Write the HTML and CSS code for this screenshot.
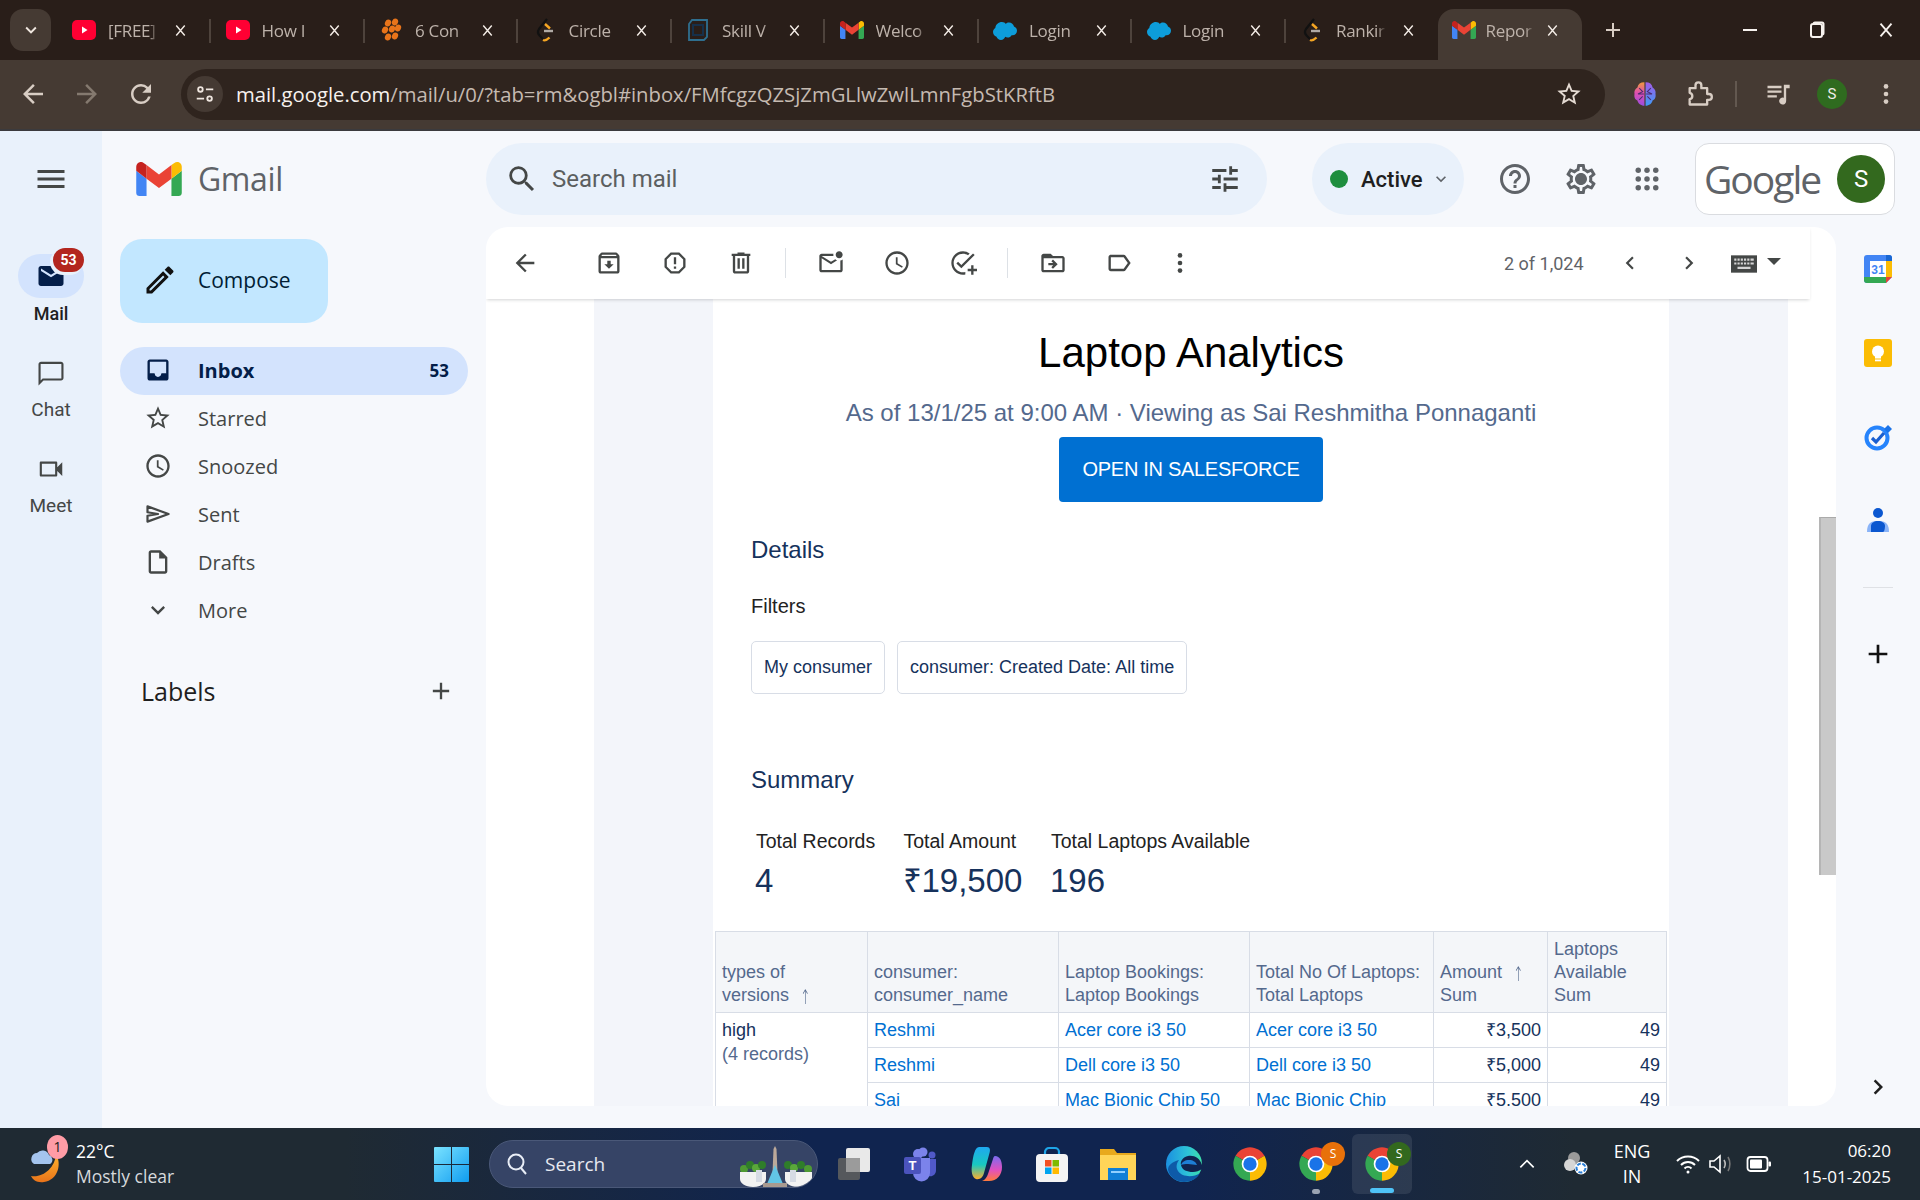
FILE: index.html
```html
<!DOCTYPE html>
<html lang="en">
<head>
    <meta charset="UTF-8">
    <meta name="viewport" content="width=device-width, initial-scale=1.0">
    <title>Report results - Gmail</title>
    <link rel="stylesheet" href="styles.css">
</head>
<body>
    <!-- icon sprite -->
    <svg class="sprite" width="0" height="0">
        <symbol id="i-menu" viewBox="0 0 24 24"><path d="M3 18h18v-2H3v2zm0-5h18v-2H3v2zm0-7v2h18V6H3z"/></symbol>
        <symbol id="i-search" viewBox="0 0 24 24"><path d="M15.5 14h-.79l-.28-.27A6.471 6.471 0 0 0 16 9.5 6.5 6.5 0 1 0 9.5 16c1.61 0 3.09-.59 4.23-1.57l.27.28v.79l5 4.99L20.49 19l-4.99-5zm-6 0C7.01 14 5 11.99 5 9.5S7.01 5 9.5 5 14 7.01 14 9.5 11.99 14 9.5 14z"/></symbol>
        <symbol id="i-tune" viewBox="0 0 24 24"><path d="M3 17v2h6v-2H3zM3 5v2h10V5H3zm10 16v-2h8v-2h-8v-2h-2v6h2zM7 9v2H3v2h4v2h2V9H7zm14 4v-2H11v2h10zm-6-4h2V7h4V5h-4V3h-2v6z"/></symbol>
        <symbol id="i-help" viewBox="0 0 24 24"><path d="M11 18h2v-2h-2v2zm1-16C6.48 2 2 6.48 2 12s4.48 10 10 10 10-4.48 10-10S17.52 2 12 2zm0 18c-4.41 0-8-3.59-8-8s3.59-8 8-8 8 3.59 8 8-3.59 8-8 8zm0-14c-2.21 0-4 1.79-4 4h2c0-1.1.9-2 2-2s2 .9 2 2c0 2-3 1.75-3 5h2c0-2.25 3-2.5 3-5 0-2.21-1.79-4-4-4z"/></symbol>
        <symbol id="i-gear" viewBox="0 0 24 24"><path d="M19.43 12.98c.04-.32.07-.64.07-.98 0-.34-.03-.66-.07-.98l2.11-1.65c.19-.15.24-.42.12-.64l-2-3.46c-.09-.16-.26-.25-.44-.25-.06 0-.12.01-.17.03l-2.49 1c-.52-.4-1.08-.73-1.69-.98l-.38-2.65C14.46 2.18 14.25 2 14 2h-4c-.25 0-.46.18-.49.42l-.38 2.65c-.61.25-1.17.59-1.69.98l-2.49-1c-.06-.02-.12-.03-.18-.03-.17 0-.34.09-.43.25l-2 3.46c-.13.22-.07.49.12.64l2.11 1.65c-.04.32-.07.65-.07.98 0 .33.03.66.07.98l-2.11 1.65c-.19.15-.24.42-.12.64l2 3.46c.09.16.26.25.44.25.06 0 .12-.01.17-.03l2.49-1c.52.4 1.08.73 1.69.98l.38 2.65c.03.24.24.42.49.42h4c.25 0 .46-.18.49-.42l.38-2.65c.61-.25 1.17-.59 1.69-.98l2.49 1c.06.02.12.03.18.03.17 0 .34-.09.43-.25l2-3.46c.12-.22.07-.49-.12-.64l-2.11-1.65zm-1.98-1.71c.04.31.05.52.05.73 0 .21-.02.43-.05.73l-.14 1.13.89.7 1.08.84-.7 1.21-1.27-.51-1.04-.42-.9.68c-.43.32-.84.56-1.25.73l-1.06.43-.16 1.13-.2 1.35h-1.4l-.19-1.35-.16-1.13-1.06-.43c-.43-.18-.83-.41-1.23-.71l-.91-.7-1.06.43-1.27.51-.7-1.21 1.08-.84.89-.7-.14-1.13c-.03-.31-.05-.54-.05-.74s.02-.43.05-.73l.14-1.13-.89-.7-1.08-.84.7-1.21 1.27.51 1.04.42.9-.68c.43-.32.84-.56 1.25-.73l1.06-.43.16-1.13.2-1.35h1.39l.19 1.35.16 1.13 1.06.43c.43.18.83.41 1.23.71l.91.7 1.06-.43 1.27-.51.7 1.21-1.07.85-.89.7.14 1.13zM12 8c-2.21 0-4 1.79-4 4s1.79 4 4 4 4-1.79 4-4-1.79-4-4-4z"/></symbol>
        <symbol id="i-apps" viewBox="0 0 24 24"><circle cx="5" cy="5" r="2.200"/><circle cx="12" cy="5" r="2.200"/><circle cx="19" cy="5" r="2.200"/><circle cx="5" cy="12" r="2.200"/><circle cx="12" cy="12" r="2.200"/><circle cx="19" cy="12" r="2.200"/><circle cx="5" cy="19" r="2.200"/><circle cx="12" cy="19" r="2.200"/><circle cx="19" cy="19" r="2.200"/></symbol>
        <symbol id="i-back" viewBox="0 0 24 24"><path d="M20 11H7.83l5.59-5.59L12 4l-8 8 8 8 1.41-1.41L7.83 13H20v-2z"/></symbol>
        <symbol id="i-forward" viewBox="0 0 24 24"><path d="M4 11h12.17l-5.59-5.59L12 4l8 8-8 8-1.41-1.41L16.17 13H4v-2z"/></symbol>
        <symbol id="i-reload" viewBox="0 0 24 24"><path d="M17.65 6.35A7.958 7.958 0 0 0 12 4c-4.42 0-7.99 3.58-7.99 8s3.57 8 7.99 8c3.73 0 6.84-2.55 7.73-6h-2.08A5.99 5.99 0 0 1 12 18c-3.31 0-6-2.69-6-6s2.69-6 6-6c1.66 0 3.14.69 4.22 1.78L13 11h7V4l-2.35 2.35z"/></symbol>
        <symbol id="i-inbox" viewBox="0 0 24 24"><path d="M19 3H5c-1.1 0-2 .9-2 2v14c0 1.1.9 2 2 2h14c1.1 0 2-.9 2-2V5c0-1.1-.9-2-2-2zm0 12h-4c0 1.66-1.34 3-3 3s-3-1.34-3-3H5V5h14v10z"/><path d="M5 15h4c0 1.66 1.34 3 3 3s3-1.34 3-3h4v4H5z"/></symbol>
        <symbol id="i-star" viewBox="0 0 24 24"><path d="M22 9.24l-7.19-.62L12 2 9.19 8.63 2 9.24l5.46 4.73L5.82 21 12 17.27 18.18 21l-1.63-7.03L22 9.24zM12 15.4l-3.76 2.27 1-4.28-3.32-2.88 4.38-.38L12 6.1l1.71 4.04 4.38.38-3.32 2.88 1 4.28L12 15.4z"/></symbol>
        <symbol id="i-clock" viewBox="0 0 24 24"><path d="M11.99 2C6.47 2 2 6.48 2 12s4.47 10 9.99 10C17.52 22 22 17.52 22 12S17.52 2 11.99 2zM12 20c-4.42 0-8-3.58-8-8s3.58-8 8-8 8 3.58 8 8-3.58 8-8 8zm.5-13H11v6l5.25 3.15.75-1.23-4.5-2.67z"/></symbol>
        <symbol id="i-send" viewBox="0 0 24 24"><path d="M3 5.500L21 12 3 18.500v-5l9-1.500-9-1.500z" fill="none" stroke="currentColor" stroke-width="1.900" stroke-linejoin="round"/></symbol>
        <symbol id="i-draft" viewBox="0 0 24 24"><path d="M14 2H6c-1.1 0-2 .9-2 2v16c0 1.1.9 2 2 2h12c1.1 0 2-.9 2-2V8l-6-6zM6 20V4h7v5h5v11H6z"/></symbol>
        <symbol id="i-more-arrow" viewBox="0 0 24 24"><path d="M16.59 8.59L12 13.17 7.41 8.59 6 10l6 6 6-6z"/></symbol>
        <symbol id="i-plus" viewBox="0 0 24 24"><path d="M19 13h-6v6h-2v-6H5v-2h6V5h2v6h6v2z"/></symbol>
        <symbol id="i-pencil" viewBox="0 0 24 24"><path d="M3 17.25V21h3.75L17.81 9.94l-3.75-3.75L3 17.25zM5.92 19H5v-.92l9.06-9.06.92.92L5.92 19zM20.71 5.63l-2.34-2.34c-.2-.2-.45-.29-.71-.29s-.51.1-.7.29l-1.83 1.83 3.75 3.75 1.83-1.83c.39-.39.39-1.02 0-1.41z"/></symbol>
        <symbol id="i-chat" viewBox="0 0 24 24"><path d="M20 3H4c-1 0-2 .9-2 2v17l4-4h14c1.100 0 2-.9 2-2V5c0-1.100-.9-2-2-2zm.3 13.300H5.300l-1.600 1.600V5c0-.2.100-.3.300-.3h16c.2 0 .3.100.3.300z"/></symbol>
        <symbol id="i-video" viewBox="0 0 24 24"><path d="M17 10.5V7c0-.55-.45-1-1-1H4c-.55 0-1 .45-1 1v10c0 .55.45 1 1 1h12c.55 0 1-.45 1-1v-3.5l4 4v-11l-4 4zM15.300 16.300H4.700V7.700h10.600z"/></symbol>
        <symbol id="i-mail" viewBox="0 0 24 24"><path d="M20 4H4c-1.1 0-2 .9-2 2v12c0 1.1.9 2 2 2h16c1.1 0 2-.9 2-2V6c0-1.1-.9-2-2-2zm0 4l-8 5-8-5V6l8 5 8-5v2z"/></symbol>
        <symbol id="i-archive" viewBox="0 0 24 24"><path d="M20.54 5.23l-1.39-1.68C18.88 3.21 18.47 3 18 3H6c-.47 0-.88.21-1.16.55L3.46 5.23C3.17 5.57 3 6.02 3 6.5V19c0 1.1.9 2 2 2h14c1.1 0 2-.9 2-2V6.5c0-.48-.17-.93-.46-1.27zM6.24 5h11.52l.83 1H5.42l.82-1zM5 19V8h14v11H5zm8.45-9h-2.9v3H8l4 4 4-4h-2.55z"/></symbol>
        <symbol id="i-spam" viewBox="0 0 24 24"><path d="M15.73 3H8.27L3 8.27v7.46L8.27 21h7.46L21 15.73V8.27L15.73 3zM19 14.9L14.9 19H9.1L5 14.9V9.1L9.1 5h5.8L19 9.1v5.8zM11 7h2v6h-2zM11 15h2v2h-2z"/></symbol>
        <symbol id="i-trash" viewBox="0 0 24 24"><path d="M15 4V3H9v1H4v2h1v13c0 1.1.9 2 2 2h10c1.1 0 2-.9 2-2V6h1V4h-5zm2 15H7V6h10v13zM9 8h2v9H9zm4 0h2v9h-2z"/></symbol>
        <symbol id="i-unread" viewBox="0 0 24 24"><path d="M22 8.98V18c0 1.1-.9 2-2 2H4c-1.1 0-2-.9-2-2V6c0-1.1.9-2 2-2h10.1c-.06.32-.1.66-.1 1s.04.68.1 1H4l8 5 3.67-2.29c.47.43 1.02.76 1.63.98L12 13 4 8v10h16V9.9c.74-.15 1.42-.48 2-.92zM16 5c0 1.66 1.34 3 3 3s3-1.34 3-3-1.34-3-3-3-3 1.34-3 3z"/></symbol>
        <symbol id="i-addtask" viewBox="0 0 24 24"><path d="M22 5.18L10.59 16.6l-4.24-4.24 1.41-1.41 2.83 2.83 10-10L22 5.18zM12 20c-4.42 0-8-3.58-8-8s3.58-8 8-8c1.58 0 3.04.46 4.28 1.25l1.44-1.44A9.9 9.9 0 0 0 12 2C6.48 2 2 6.48 2 12s4.48 10 10 10c.7 0 1.4-.07 2-.2v-2c-.6.13-1.3.2-2 .2zM19 14h2v3h3v2h-3v3h-2v-3h-3v-2h3z"/></symbol>
        <symbol id="i-move" viewBox="0 0 24 24"><path d="M20 6h-8l-2-2H4c-1.1 0-1.99.9-1.99 2L2 18c0 1.1.9 2 2 2h16c1.1 0 2-.9 2-2V8c0-1.1-.9-2-2-2zm0 12H4V8h16v10zm-8.01-9l-1.41 1.41L12.16 12H8v2h4.16l-1.59 1.59L11.99 17 16 13.01 11.99 9z"/></symbol>
        <symbol id="i-label" viewBox="0 0 24 24"><path d="M17.63 5.84C17.27 5.33 16.67 5 16 5L5 5.01C3.9 5.01 3 5.9 3 7v10c0 1.1.9 1.99 2 1.99L16 19c.67 0 1.27-.33 1.63-.84L22 12l-4.37-6.16zM16 17H5V7h11l3.55 5L16 17z"/></symbol>
        <symbol id="i-vert" viewBox="0 0 24 24"><circle cx="12" cy="5.500" r="2"/><circle cx="12" cy="12" r="2"/><circle cx="12" cy="18.500" r="2"/></symbol>
        <symbol id="i-left" viewBox="0 0 24 24"><path d="M15.41 7.41L14 6l-6 6 6 6 1.41-1.41L10.83 12z"/></symbol>
        <symbol id="i-right" viewBox="0 0 24 24"><path d="M10 6L8.59 7.41 13.17 12l-4.58 4.59L10 18l6-6z"/></symbol>
        <symbol id="i-keyboard" viewBox="0 0 24 18"><path d="M0 1h24v16H0z"/><path d="M3 4h2v2H3zm3 0h2v2H6zm3 0h2v2H9zm3 0h2v2h-2zm3 0h2v2h-2zm3 0h3v2h-3zM3 7.500h2v2H3zm3 0h2v2H6zm3 0h2v2H9zm3 0h2v2h-2zm3 0h2v2h-2zm3 0h3v2h-3zM6 11.500h12v2H6z" fill="#d5d5d5"/></symbol>
        <symbol id="i-x" viewBox="0 0 24 24"><path d="M6 5l12 14M18 5L6 19" fill="none" stroke="currentColor" stroke-width="2"/></symbol>

        <symbol id="l-gmail" viewBox="0 0 75 56">
            <path fill="#4285f4" d="M5.1 56H17V27.4L0 14.6V50.9C0 53.7 2.3 56 5.1 56z"/>
            <path fill="#34a853" d="M58 56h11.9c2.8 0 5.1-2.3 5.1-5.1V14.6L58 27.4z"/>
            <path fill="#fbbc04" d="M58 5.1v22.3l17-12.8V7.8c0-6.3-7.2-9.9-12.2-6.1z"/>
            <path fill="#ea4335" d="M17 27.4V5.1l20.5 15.4L58 5.1v22.3L37.5 42.8z"/>
            <path fill="#c5221f" d="M0 7.8v6.8l17 12.8V5.1l-4.8-3.6C7.2-2.3 0 1.3 0 7.8z"/>
        </symbol>
        <symbol id="l-yt" viewBox="0 0 24 24"><rect x="0" y="2" width="24" height="20" rx="5" fill="#ff0033"/><path d="M10 8.500v7l5.500-3.500z" fill="#fff"/></symbol>
        <symbol id="l-hive" viewBox="0 0 24 24"><g fill="#e8741a"><ellipse cx="9" cy="5" rx="3" ry="3.600" transform="rotate(25 9 5)"/><ellipse cx="16" cy="4" rx="3" ry="3.600" transform="rotate(25 16 4)"/><ellipse cx="6" cy="12" rx="3" ry="3.600" transform="rotate(25 6 12)"/><ellipse cx="13" cy="11" rx="3" ry="3.600" transform="rotate(25 13 11)"/><ellipse cx="19" cy="10" rx="3" ry="3.600" transform="rotate(25 19 10)"/><ellipse cx="9" cy="19" rx="3" ry="3.600" transform="rotate(25 9 19)"/><ellipse cx="16" cy="18" rx="3" ry="3.600" transform="rotate(25 16 18)"/></g></symbol>
        <symbol id="l-leet" viewBox="0 0 24 24"><path d="M14 1L6 11c-1.500 2.200-1 5 1 7l3 3" fill="none" stroke="#111" stroke-width="2.200"/><path d="M12 6l5 4.500M10 22c2 1 4 0 6.500-2.500" fill="none" stroke="#f5a623" stroke-width="2.400"/><path d="M11 13h9" stroke="#b0aaa5" stroke-width="2.400"/></symbol>
        <symbol id="l-skill" viewBox="0 0 24 24"><path d="M6 2h15v17l-3 3H3V6z" fill="none" stroke="#2f6f8f" stroke-width="1.800"/><path d="M7 7h10v10H7z" fill="none" stroke="#16304a" stroke-width="2"/></symbol>
        <symbol id="l-cloud" viewBox="0 0 24 24"><path d="M9 4c1.600 0 3 .7 3.800 1.900C13.600 5 14.800 4.500 16 4.500c2.500 0 4.500 1.700 5 4 1.700.6 3 2.300 3 4.200 0 2.500-2 4.500-4.500 4.500h-.9c-.8 1.500-2.300 2.300-4 2.300-.9 0-1.700-.2-2.400-.7C11.600 20.800 10 22 8 22c-2.100 0-3.900-1.300-4.500-3.200C1.500 18 0 16.200 0 14c0-1.700.9-3.200 2.300-4C2.700 6.500 5.500 4 9 4z" fill="#0d9dda"/></symbol>
        <symbol id="l-chrome" viewBox="0 0 48 48">
            <path fill="#ea4335" d="M24 24L6.700 14A20 20 0 0 1 41.300 14z"/>
            <path fill="#fbbc04" d="M24 24L41.300 14A20 20 0 0 1 24 44z"/>
            <path fill="#34a853" d="M24 24L24 44A20 20 0 0 1 6.700 14z"/>
            <circle cx="24" cy="24" r="10" fill="#fff"/><circle cx="24" cy="24" r="8" fill="#1a73e8"/>
        </symbol>
    </svg>

    <!-- browser chrome -->
    <div class="tabstrip">
        <div class="tab-search"><svg class="ico ico-16"><use href="#i-more-arrow"/></svg></div>
        <div class="tab"><svg class="fav"><use href="#l-yt"/></svg><span class="tab-title">[FREE]</span><svg class="tab-x"><use href="#i-x"/></svg></div>
        <div class="tab"><svg class="fav"><use href="#l-yt"/></svg><span class="tab-title">How I</span><svg class="tab-x"><use href="#i-x"/></svg></div>
        <div class="tab"><svg class="fav"><use href="#l-hive"/></svg><span class="tab-title">6 Con</span><svg class="tab-x"><use href="#i-x"/></svg></div>
        <div class="tab"><svg class="fav"><use href="#l-leet"/></svg><span class="tab-title">Circle</span><svg class="tab-x"><use href="#i-x"/></svg></div>
        <div class="tab"><svg class="fav"><use href="#l-skill"/></svg><span class="tab-title">Skill V</span><svg class="tab-x"><use href="#i-x"/></svg></div>
        <div class="tab"><svg class="fav"><use href="#l-gmail"/></svg><span class="tab-title">Welco</span><svg class="tab-x"><use href="#i-x"/></svg></div>
        <div class="tab"><svg class="fav"><use href="#l-cloud"/></svg><span class="tab-title">Login</span><svg class="tab-x"><use href="#i-x"/></svg></div>
        <div class="tab"><svg class="fav"><use href="#l-cloud"/></svg><span class="tab-title">Login</span><svg class="tab-x"><use href="#i-x"/></svg></div>
        <div class="tab"><svg class="fav"><use href="#l-leet"/></svg><span class="tab-title">Rankir</span><svg class="tab-x"><use href="#i-x"/></svg></div>
        <div class="tab tab-active"><svg class="fav"><use href="#l-gmail"/></svg><span class="tab-title">Repor</span><svg class="tab-x"><use href="#i-x"/></svg></div>
        <svg class="ico new-tab"><use href="#i-plus"/></svg>
        <div class="win-btns">
            <span class="win-min"></span>
            <span class="win-restore"></span>
            <svg class="win-close"><use href="#i-x"/></svg>
        </div>
    </div>

    <div class="toolbar">
        <svg class="ico nav-btn"><use href="#i-back"/></svg>
        <svg class="ico nav-btn nav-off"><use href="#i-forward"/></svg>
        <svg class="ico nav-btn"><use href="#i-reload"/></svg>
        <div class="omnibox">
            <span class="site-info">
                <svg viewBox="0 0 24 24" width="22" height="22"><circle cx="7" cy="7" r="2.500" fill="none" stroke="currentColor" stroke-width="2"/><path d="M13 7h8M3 17h8" stroke="currentColor" stroke-width="2"/><circle cx="17" cy="17" r="2.500" fill="none" stroke="currentColor" stroke-width="2"/></svg>
            </span>
            <span class="url"><span class="url-host">mail.google.com</span>/mail/u/0/?tab=rm&amp;ogbl#inbox/FMfcgzQZSjZmGLlwZwlLmnFgbStKRftB</span>
            <svg class="ico url-star"><use href="#i-star"/></svg>
        </div>
        <svg class="ext-brain" viewBox="0 0 24 24" width="28" height="28">
            <defs><linearGradient id="brainL" x1="0" y1="0" x2="0" y2="1"><stop offset="0" stop-color="#f09a3e"/><stop offset=".45" stop-color="#e04fb0"/><stop offset="1" stop-color="#9b4de0"/></linearGradient><linearGradient id="brainR" x1="0" y1="0" x2="0" y2="1"><stop offset="0" stop-color="#a25be8"/><stop offset="1" stop-color="#3f9bf5"/></linearGradient></defs>
            <path d="M11.500 2C8 2 6 3.500 5.500 6.500 3.500 7.500 2.500 10 3 12c-.5 2.500.5 5 2.500 5.500.5 2.500 3 4.500 6 4.500z" fill="url(#brainL)"/>
            <path d="M12.500 2c3.500 0 5.500 1.500 6 4.500 2 1 3 3.500 2.500 5.500.5 2.500-.5 5-2.500 5.500-.5 2.500-3 4.500-6 4.500z" fill="url(#brainR)"/>
            <path d="M7 7l3 3-4 2h5M17 7l-3 3 4 2h-5M7 17l3-3M17 17l-3-3" fill="none" stroke="#4c2a70" stroke-width=".9"/>
        </svg>
        <svg class="ext-puzzle" viewBox="0 0 24 24" width="28" height="28"><path d="M4 7h5V4.500a2.500 2.500 0 0 1 5 0V7h5v5h1.500a2.500 2.500 0 0 1 0 5H19v4H4v-4.500a2.800 2.800 0 0 0 0-5.500z" fill="none" stroke="#d8cdc4" stroke-width="2" stroke-linejoin="round"/></svg>
        <span class="tool-sep"></span>
        <svg class="ext-media" viewBox="0 0 24 24" width="28" height="28" fill="#d8cdc4"><path d="M3 5h12v2H3zM3 9h12v2H3zM3 13h8v2H3zM17 4h5v3h-3v11a3 3 0 1 1-2-2.800z"/></svg>
        <span class="profile-dot">S</span>
        <svg class="ico menu-dots"><use href="#i-vert"/></svg>
    </div>

    <!-- gmail -->
    <div class="app">
        <nav class="rail">
            <svg class="ico rail-menu"><use href="#i-menu"/></svg>
            <div class="rail-item rail-mail">
                <span class="rail-pill">
                    <svg class="ico"><use href="#i-mail"/></svg>
                    <b class="rail-badge">53</b>
                </span>
                <span class="rail-label">Mail</span>
            </div>
            <div class="rail-item">
                <span class="rail-pill"><svg class="ico"><use href="#i-chat"/></svg></span>
                <span class="rail-label">Chat</span>
            </div>
            <div class="rail-item">
                <span class="rail-pill"><svg class="ico"><use href="#i-video"/></svg></span>
                <span class="rail-label">Meet</span>
            </div>
        </nav>

        <aside class="sidebar">
            <div class="brand">
                <svg class="brand-logo"><use href="#l-gmail"/></svg>
                <span class="brand-name">Gmail</span>
            </div>
            <div class="compose">
                <svg class="ico"><use href="#i-pencil"/></svg>
                <span>Compose</span>
            </div>
            <ul class="folders">
                <li class="folder folder-on"><svg class="ico"><use href="#i-inbox"/></svg><span>Inbox</span><em>53</em></li>
                <li class="folder"><svg class="ico"><use href="#i-star"/></svg><span>Starred</span></li>
                <li class="folder"><svg class="ico"><use href="#i-clock"/></svg><span>Snoozed</span></li>
                <li class="folder"><svg class="ico"><use href="#i-send"/></svg><span>Sent</span></li>
                <li class="folder"><svg class="ico"><use href="#i-draft"/></svg><span>Drafts</span></li>
                <li class="folder"><svg class="ico"><use href="#i-more-arrow"/></svg><span>More</span></li>
            </ul>
            <div class="labels-head">
                <span>Labels</span>
                <svg class="ico"><use href="#i-plus"/></svg>
            </div>
        </aside>

        <div class="workspace">
            <header class="topbar">
                <div class="searchbox">
                    <svg class="ico"><use href="#i-search"/></svg>
                    <span class="search-text">Search mail</span>
                    <svg class="ico search-tune"><use href="#i-tune"/></svg>
                </div>
                <div class="status"><i class="status-dot"></i><span>Active</span><svg class="ico"><use href="#i-more-arrow"/></svg></div>
                <svg class="ico top-ico top-help"><use href="#i-help"/></svg>
                <svg class="ico top-ico"><use href="#i-gear"/></svg>
                <svg class="ico top-ico top-apps"><use href="#i-apps"/></svg>
                <div class="account"><span class="google-word">Google</span><span class="avatar">S</span></div>
            </header>

            <main class="card">
                <div class="mail-tools">
                    <span class="mt mt-back"><svg class="ico"><use href="#i-back"/></svg></span>
                    <span class="mt mt-first"><svg class="ico"><use href="#i-archive"/></svg></span>
                    <span class="mt"><svg class="ico"><use href="#i-spam"/></svg></span>
                    <span class="mt"><svg class="ico"><use href="#i-trash"/></svg></span>
                    <i class="mt-sep"></i>
                    <span class="mt"><svg class="ico"><use href="#i-unread"/></svg></span>
                    <span class="mt"><svg class="ico"><use href="#i-clock"/></svg></span>
                    <span class="mt"><svg class="ico"><use href="#i-addtask"/></svg></span>
                    <i class="mt-sep"></i>
                    <span class="mt"><svg class="ico"><use href="#i-move"/></svg></span>
                    <span class="mt"><svg class="ico"><use href="#i-label"/></svg></span>
                    <span class="mt mt-more"><svg class="ico"><use href="#i-vert"/></svg></span>
                    <span class="pager">2 of 1,024</span>
                    <span class="mt pager-btn"><svg class="ico"><use href="#i-left"/></svg></span>
                    <span class="mt pager-btn"><svg class="ico"><use href="#i-right"/></svg></span>
                    <svg class="ico kb"><use href="#i-keyboard"/></svg>
                    <i class="kb-caret"></i>
                </div>

                <div class="mail-scroll">
                    <div></div>
                    <div class="gutter"></div>
                    <article class="report">
                        <h1>Laptop Analytics</h1>
                        <p class="report-sub">As of 13/1/25 at 9:00 AM · Viewing as Sai Reshmitha Ponnaganti</p>
                        <a class="sf-btn">OPEN IN SALESFORCE</a>
                        <h2 class="details-h">Details</h2>
                        <div class="filters-h">Filters</div>
                        <div class="chips">
                            <span class="chip">My consumer</span>
                            <span class="chip">consumer: Created Date: All time</span>
                        </div>
                        <h2 class="summary-h">Summary</h2>
                        <div class="totals">
                            <div class="total total-a"><span>Total Records</span><b>4</b></div>
                            <div class="total total-b"><span>Total Amount</span><b>₹19,500</b></div>
                            <div class="total"><span>Total Laptops Available</span><b>196</b></div>
                        </div>
                        <table class="grid">
                            <colgroup>
                                <col class="c1"><col class="c2"><col class="c3"><col class="c4"><col class="c5"><col class="c6">
                            </colgroup>
                            <thead>
                                <tr>
                                    <th>types of<br>versions <i class="up">↑</i></th>
                                    <th>consumer:<br>consumer_name</th>
                                    <th>Laptop Bookings:<br>Laptop Bookings</th>
                                    <th>Total No Of Laptops:<br>Total Laptops</th>
                                    <th>Amount <i class="up">↑</i><br>Sum</th>
                                    <th>Laptops<br>Available<br>Sum</th>
                                </tr>
                            </thead>
                            <tbody>
                                <tr>
                                    <td rowspan="3" class="group">high<br><span>(4 records)</span></td>
                                    <td class="lnk">Reshmi</td><td class="lnk">Acer core i3 50</td><td class="lnk">Acer core i3 50</td>
                                    <td class="num">₹3,500</td><td class="num">49</td>
                                </tr>
                                <tr>
                                    <td class="lnk">Reshmi</td><td class="lnk">Dell core i3 50</td><td class="lnk">Dell core i3 50</td>
                                    <td class="num">₹5,000</td><td class="num">49</td>
                                </tr>
                                <tr>
                                    <td class="lnk">Sai</td><td class="lnk">Mac Bionic Chip 50</td><td class="lnk">Mac Bionic Chip</td>
                                    <td class="num">₹5,500</td><td class="num">49</td>
                                </tr>
                            </tbody>
                        </table>
                    </article>
                    <div class="gutter"></div>
                    <div></div>
                    <div class="scrollbar"><div class="thumb"></div></div>
                </div>
            </main>
        </div>

        <aside class="addons">
            <div class="addon">
                <svg viewBox="0 0 28 28" width="28" height="28">
                    <path d="M3 0h22a3 3 0 0 1 3 3v19l-6 6H3a3 3 0 0 1-3-3V3a3 3 0 0 1 3-3z" fill="#4285f4"/>
                    <path d="M22 0h3a3 3 0 0 1 3 3v3h-6z" fill="#1967d2"/><path d="M22 6h6v16h-6z" fill="#fbbc04"/>
                    <path d="M0 22h22v6H3a3 3 0 0 1-3-3z" fill="#34a853"/><path d="M22 22h6l-6 6z" fill="#ea4335"/>
                    <rect x="6" y="6" width="16" height="16" fill="#fff"/>
                    <text x="14" y="19" class="cal-num" text-anchor="middle">31</text>
                </svg>
            </div>
            <div class="addon">
                <svg viewBox="0 0 28 28" width="28" height="28"><rect width="28" height="28" rx="3" fill="#fbbc04"/><circle cx="14" cy="12.500" r="6" fill="#fff"/><rect x="11" y="17" width="6" height="2.500" fill="#fff"/><rect x="11" y="20.500" width="6" height="1.800" fill="#fff"/></svg>
            </div>
            <div class="addon">
                <svg viewBox="0 0 28 28" width="28" height="28"><circle cx="13" cy="15" r="10.500" fill="none" stroke="#2684fc" stroke-width="4"/><path d="M8 15l4 4 8-9" fill="none" stroke="#1a5fd0" stroke-width="3.200"/><path d="M20 6l4-4 4 4-4 4z" fill="#1a73e8"/></svg>
            </div>
            <div class="addon">
                <svg viewBox="0 0 28 28" width="28" height="28"><circle cx="14" cy="6" r="5" fill="#0b57d0"/><path d="M3 25c0-8 3-11 11-11s11 3 11 11z" fill="#8ab4f8"/><path d="M7 25v-6c0-3 3-5 7-5s7 2 7 5c0 3-1 6-2 6z" fill="#0b57d0"/></svg>
            </div>
            <i class="addon-sep"></i>
            <svg class="ico addon-plus"><use href="#i-plus"/></svg>
            <svg class="ico addon-hide"><use href="#i-right"/></svg>
        </aside>
    </div>

    <!-- windows taskbar -->
    <footer class="taskbar">
        <div class="weather">
            <span class="weather-ico">
                <svg viewBox="0 0 34 40" width="34" height="40"><defs><linearGradient id="moon" x1="0" y1="0" x2="0" y2="1"><stop offset="0" stop-color="#ffb52e"/><stop offset="1" stop-color="#e8731a"/></linearGradient></defs><path d="M26 10c6 10 2 26-12 28C7 39 3 36 1 32c12 2 24-8 25-22z" fill="url(#moon)"/><path d="M4 20a6 6 0 0 1 3-11 7 7 0 0 1 12 2 5 5 0 0 1 1 9z" fill="#a4c4ee"/></svg>
                <b class="weather-badge">1</b>
            </span>
            <div class="weather-text"><span>22°C</span><span class="weather-sub">Mostly clear</span></div>
        </div>
        <svg class="winlogo" viewBox="0 0 35 35" width="35" height="35"><defs><linearGradient id="win" x1="0" y1="0" x2="1" y2="1"><stop offset="0" stop-color="#7be3ff"/><stop offset="1" stop-color="#0f9cf0"/></linearGradient></defs><path d="M1 0h16v17H0V1a1 1 0 0 1 1-1zM18 0h16a1 1 0 0 1 1 1v16H18zM0 18h17v17H1a1 1 0 0 1-1-1zM18 18h17v16a1 1 0 0 1-1 1H18z" fill="url(#win)"/></svg>
        <div class="task-search">
            <svg viewBox="0 0 24 24" width="24" height="24"><circle cx="11" cy="10" r="7.500" fill="none" stroke="#e8edf6" stroke-width="2"/><path d="M16 16l5 6" stroke="#e8edf6" stroke-width="2"/></svg>
            <span>Search</span>
            <svg class="search-art" viewBox="0 0 76 42" width="76" height="42">
                <circle cx="6" cy="24" r="4" fill="#4f9a33"/><circle cx="12" cy="20" r="4" fill="#2f7d2a"/><circle cx="18" cy="23" r="4" fill="#5aa83a"/><circle cx="24" cy="20" r="4" fill="#2f7d2a"/>
                <circle cx="50" cy="20" r="4" fill="#2f7d2a"/><circle cx="56" cy="23" r="4" fill="#5aa83a"/><circle cx="63" cy="20" r="4" fill="#2f7d2a"/><circle cx="70" cy="24" r="4" fill="#4f9a33"/>
                <path d="M2 27h26v7c0 4-5 8-13 8S2 38 2 34zM47 27h27v7c0 4-6 8-14 8s-13-4-13-8z" fill="#f2f2f2"/>
                <rect x="18" y="25" width="6" height="12" fill="#d6dbe4"/><rect x="52" y="25" width="6" height="12" fill="#d6dbe4"/>
                <path d="M37 1l1.500 3 1 24h-5l1-24z" fill="#bca99a"/>
                <path d="M37 20l8 19H29z" fill="#62c5e6"/><rect x="25" y="38" width="24" height="4" fill="#a89a90"/>
            </svg>
        </div>
        <div class="task-apps">
            <span class="app-slot"><svg viewBox="0 0 36 36" width="36" height="36"><rect x="2" y="12" width="22" height="22" rx="2" fill="#55585c"/><rect x="10" y="2" width="24" height="24" rx="2" fill="#e9e9e9"/><rect x="10" y="12" width="14" height="14" fill="#9b9b9b"/></svg></span>
            <span class="app-slot"><svg viewBox="0 0 36 36" width="36" height="36"><circle cx="21" cy="6" r="4.500" fill="#7b83eb"/><circle cx="30" cy="9" r="3.500" fill="#5059c9"/><path d="M24 13h10v11c0 5-4 7-7 6z" fill="#5059c9"/><path d="M11 12h17v15a8.500 8.500 0 0 1-17 0z" fill="#7b83eb"/><circle cx="16" cy="8" r="5" fill="#7b83eb"/><rect x="2" y="11" width="17" height="17" rx="2" fill="#4b53bc"/><text x="10.500" y="24" class="teams-t" text-anchor="middle">T</text></svg></span>
            <span class="app-slot"><svg viewBox="0 0 36 36" width="36" height="36"><defs><linearGradient id="cop" x1="0" y1="0" x2="0" y2="1"><stop offset="0" stop-color="#1fa8f0"/><stop offset=".55" stop-color="#18c8c0"/><stop offset="1" stop-color="#ffb02e"/></linearGradient><linearGradient id="cop2" x1="0" y1="0" x2="0" y2="1"><stop offset="0" stop-color="#7a6cf0"/><stop offset=".55" stop-color="#e050c0"/><stop offset="1" stop-color="#ff7a3c"/></linearGradient></defs><path d="M11 1h8c3 0 3.500 3 2.500 6L16 27c-1 4-4 7-8 6-4-1.500-5-8-4-14C5 10 7 1 11 1z" fill="url(#cop)"/><path d="M27 10c5 0 7 5 7 11 0 8-5 14-13 14h-7c3-1 5-4 6-7l5-15c.3-1.500 1-3 2-3z" fill="url(#cop2)"/></svg></span>
            <span class="app-slot"><svg viewBox="0 0 36 36" width="36" height="40"><path d="M11 10V6a4 4 0 0 1 4-4h6a4 4 0 0 1 4 4v4" fill="none" stroke="#1ea5e8" stroke-width="2.200"/><rect x="2" y="8" width="32" height="28" rx="4" fill="#f4f4f4"/><rect x="11" y="14" width="6.500" height="6.500" fill="#f25022"/><rect x="18.500" y="14" width="6.500" height="6.500" fill="#7fba00"/><rect x="11" y="21.500" width="6.500" height="6.500" fill="#00a4ef"/><rect x="18.500" y="21.500" width="6.500" height="6.500" fill="#ffb900"/></svg></span>
            <span class="app-slot"><svg viewBox="0 0 36 36" width="36" height="36"><path d="M0 3h14l3 4h19v27H0z" fill="#e8a91c"/><path d="M0 9h36v25H0z" fill="#ffd558"/><path d="M8 22h20v12H8z" fill="#0f7fd6"/><path d="M11 25h14v2H11z" fill="#8fd0ff"/></svg></span>
            <span class="app-slot"><svg viewBox="0 0 36 36" width="36" height="36"><defs><linearGradient id="edg" x1="0" y1="0" x2="1" y2="0"><stop offset="0" stop-color="#1b8fe0"/><stop offset=".6" stop-color="#2dc3d8"/><stop offset="1" stop-color="#3ee0a8"/></linearGradient></defs><circle cx="18" cy="18" r="18" fill="url(#edg)"/><path d="M2 24c2 8 9 12 16 12 7 0 13-3 16-9-7 5-18 4-22-2-2-3-2-7 1-11C6 16 2 19 2 24z" fill="#0e5aa8"/><path d="M36 19C34 12 28 9 22 10c-5 1-8 5-7 9 1 5 6 7 12 7 3 0 6-1 9-3z" fill="#10244f"/><path d="M15 19c1-3 4-5 8-5 4 0 7 2 8 5-3 0-6-1-9-1-3 0-5 0-7 1z" fill="#1e7fd6"/></svg></span>
            <span class="app-slot"><svg class="ico-chrome"><use href="#l-chrome"/></svg></span>
            <span class="app-slot app-open"><svg class="ico-chrome"><use href="#l-chrome"/></svg><b class="prof prof-s">S</b></span>
            <span class="app-slot app-current"><svg class="ico-chrome"><use href="#l-chrome"/></svg><b class="prof prof-g">S</b></span>
        </div>
        <div class="tray">
            <svg class="tray-up" viewBox="0 0 24 24" width="20" height="20"><path d="M4 16l8-8 8 8" fill="none" stroke="#fff" stroke-width="2"/></svg>
            <svg class="tray-cloud" viewBox="0 0 26 26" width="26" height="26"><circle cx="11" cy="7" r="6" fill="#9a9a9a"/><circle cx="7" cy="14" r="6" fill="#d6d6d6"/><circle cx="18" cy="17" r="6.500" fill="#fff"/><circle cx="18" cy="17" r="4.500" fill="none" stroke="#2a7fd8" stroke-width="2" stroke-dasharray="4 1.500"/></svg>
            <div class="tray-lang"><span>ENG</span><span>IN</span></div>
            <svg class="tray-wifi" viewBox="0 0 24 24" width="24" height="24" fill="none" stroke="#fff" stroke-width="2"><path d="M1 9c6-6 16-6 22 0M5 13c4-4 10-4 14 0M8.500 16.500c2-2 5-2 7 0"/><circle cx="12" cy="20" r="1.500" fill="#fff" stroke="none"/></svg>
            <svg class="tray-sound" viewBox="0 0 26 24" width="26" height="24" fill="none" stroke="#fff" stroke-width="1.600"><path d="M2 9h4l6-5v16l-6-5H2z"/><path d="M16 8c1.500 2.500 1.500 5.500 0 8" stroke="#bbb"/><path d="M20 5c2.500 4 2.500 10 0 14" stroke="#777"/></svg>
            <svg class="tray-batt" viewBox="0 0 26 24" width="26" height="24"><rect x="1.500" y="5" width="20" height="14" rx="3" fill="none" stroke="#fff" stroke-width="1.800"/><rect x="4" y="7.500" width="12" height="9" rx="1" fill="#fff"/><rect x="22.500" y="9.500" width="2.500" height="5" rx="1" fill="#fff"/></svg>
            <div class="tray-clock"><span>06:20</span><span>15-01-2025</span></div>
        </div>
    </footer>
</body>
</html>
```

FILE: styles.css
```css
* {
    box-sizing: border-box;
}
html, body {
    margin: 0;
    height: 100%;
}
body {
    width: 1920px;
    height: 1200px;
    overflow: hidden;
    display: flex;
    flex-direction: column;
    font-family: Roboto, Arial, sans-serif;
    background: #f6f8fc;
}
.sprite {
    position: absolute;
}
.ico {
    width: 24px;
    height: 24px;
    fill: currentColor;
    flex: none;
}
.ico-16 {
    width: 22px;
    height: 22px;
}

/* tab strip */
.tabstrip {
    height: 60px;
    flex: none;
    background: #291e19;
    display: flex;
    align-items: flex-end;
    padding-left: 10px;
    color: #d8cdc4;
}
.tab-search {
    width: 41px;
    height: 42px;
    margin-bottom: 9px;
    border-radius: 13px;
    background: #453a33;
    display: flex;
    align-items: center;
    justify-content: center;
    color: #efe6df;
    flex: none;
}
.tab {
    width: 153.500px;
    height: 51px;
    flex: none;
    display: flex;
    align-items: center;
    padding: 0 0 9px 15px;
    position: relative;
    font-family: "Open Sans", sans-serif;
}
.tab-search + .tab {
    margin-left: 6px;
}
.tab::after {
    content: "";
    position: absolute;
    right: -0.5px;
    top: 10px;
    height: 24px;
    width: 2px;
    background: #4e433c;
}
.fav {
    width: 24px;
    height: 24px;
    flex: none;
}
.tab-title {
    margin-left: 12px;
    width: 50px;
    flex: none;
    white-space: nowrap;
    font-size: 17px;
    letter-spacing: -0.3px;
    color: #bdb2aa;
    -webkit-mask-image: linear-gradient(90deg, #000 82%, transparent);
    mask-image: linear-gradient(90deg, #000 82%, transparent);
}
.tab-x {
    width: 17px;
    height: 17px;
    margin-left: 14px;
    color: #f3ece6;
    flex: none;
}
.tab-active {
    width: 144px;
    margin-left: -1px;
    padding-left: 14px;
    height: 51px;
    background: #453a33;
    border-radius: 16px 16px 0 0;
}
.tab-active::after {
    display: none;
}
.tab-active .tab-title {
    margin-left: 10px;
    width: 48px;
}
.tab-active .tab-x {
    margin-left: 10px;
}
.tab:has(+ .tab-active)::after {
    display: none;
}
.new-tab {
    width: 24px;
    height: 24px;
    margin: 0 0 18px 19px;
    color: #d8cdc4;
}
.win-btns {
    margin-left: auto;
    height: 60px;
    display: flex;
    align-items: center;
    color: #f7f2ee;
}
.win-min {
    width: 14px;
    height: 2px;
    background: currentColor;
}
.win-restore {
    width: 13px;
    height: 15px;
    margin-left: 53px;
    border: 2px solid currentColor;
    border-radius: 3px;
    box-shadow: 2px -2px 0 -0.5px currentColor;
}
.win-close {
    width: 22px;
    height: 22px;
    margin: 0 23px 0 52px;
}

/* address bar */
.toolbar {
    height: 71px;
    flex: none;
    background: #453a33;
    border-bottom: 2px solid #3b3a3d;
    display: flex;
    align-items: center;
    color: #d8cdc4;
    padding-bottom: 1px;
}
.nav-btn {
    width: 30px;
    height: 30px;
    margin-left: 24px;
    fill: #d8cdc4;
}
.nav-btn:first-child {
    margin-left: 18px;
}
.nav-off {
    fill: #84796f;
}
.omnibox {
    width: 1424px;
    height: 51px;
    margin-left: 25px;
    border-radius: 26px;
    background: #2f241e;
    display: flex;
    align-items: center;
    padding-left: 6px;
}
.site-info {
    width: 36px;
    height: 36px;
    border-radius: 50%;
    background: #453a33;
    display: flex;
    align-items: center;
    justify-content: center;
    color: #efe6df;
    flex: none;
}
.url {
    margin-left: 13px;
    font-family: "Open Sans", sans-serif;
    font-size: 20.250px;
    color: #c5bab1;
    white-space: nowrap;
}
.url-host {
    color: #f7f2ee;
}
.url-star {
    width: 28px;
    height: 28px;
    margin-left: auto;
    margin-right: 22px;
    fill: #e5dbd3;
}
.ext-brain {
    margin-left: 26px;
}
.ext-puzzle {
    margin-left: 26px;
}
.tool-sep {
    width: 2px;
    height: 26px;
    margin-left: 22px;
    background: #635850;
}
.ext-media {
    margin-left: 27px;
}
.profile-dot {
    width: 30px;
    height: 30px;
    margin-left: 25px;
    border-radius: 50%;
    background: #2f6b1f;
    color: #f0ede9;
    font-size: 15px;
    display: flex;
    align-items: center;
    justify-content: center;
}
.menu-dots {
    width: 28px;
    height: 28px;
    margin-left: 25px;
    fill: #d8cdc4;
}

/* gmail shell */
.app {
    flex: 1;
    min-height: 0;
    display: flex;
}
.rail {
    width: 102px;
    flex: none;
    background: #e9f1fb;
    display: flex;
    flex-direction: column;
    align-items: center;
    color: #444746;
}
.rail-menu {
    width: 36px;
    height: 36px;
    margin-top: 30px;
}
.rail-item {
    width: 100%;
    height: 96px;
    display: flex;
    flex-direction: column;
    align-items: center;
}
.rail-mail {
    margin-top: 57px;
}
.rail-pill {
    width: 66px;
    height: 44px;
    border-radius: 22px;
    display: flex;
    align-items: center;
    justify-content: center;
    position: relative;
}
.rail-pill .ico {
    width: 30px;
    height: 30px;
}
.rail-mail .rail-pill {
    background: #d3e3fd;
    color: #041e49;
}
.rail-label {
    margin-top: 3px;
    font-size: 19px;
    line-height: 23px;
}
.rail-mail .rail-label {
    margin-top: 4px;
    font-size: 18px;
    font-weight: 500;
    color: #1f1f1f;
}
.rail-item + .rail-item .rail-pill {
    margin-top: 1px;
}
.rail-badge {
    position: absolute;
    top: -6px;
    right: 0;
    width: 31px;
    height: 24px;
    border-radius: 12px;
    background: #b3261e;
    color: #fff;
    font-size: 14px;
    font-weight: 700;
    text-align: center;
    line-height: 24px;
    box-shadow: -2px 2px 0 1px #e9f1fb;
}

/* sidebar */
.sidebar {
    width: 384px;
    flex: none;
    padding-left: 18px;
    color: #444746;
}
.brand {
    height: 96px;
    display: flex;
    align-items: center;
    padding: 0 0 0 16px;
}
.brand-logo {
    width: 46px;
    height: 34px;
}
.brand-name {
    margin: -2px 0 0 16px;
    font-family: "Open Sans", sans-serif;
    font-size: 32px;
    color: #5f6368;
    letter-spacing: -0.4px;
}
.compose {
    width: 208px;
    height: 84px;
    margin-top: 12px;
    border-radius: 22px;
    background: #c2e7ff;
    display: flex;
    align-items: center;
    padding: 0 0 2px 22px;
    color: #001d35;
    font-family: "Open Sans", sans-serif;
    font-size: 21px;
    font-weight: 500;
}
.compose .ico {
    width: 36px;
    height: 36px;
    color: #111;
}
.compose span {
    margin-left: 20px;
}
.folders {
    list-style: none;
    margin: 24px 0 0;
    padding: 0;
    width: 348px;
}
.folder {
    height: 48px;
    display: flex;
    align-items: center;
    padding: 0 19px 2px 24px;
    border-radius: 24px;
    font-family: "Open Sans", sans-serif;
    font-size: 20px;
}
.folder .ico {
    width: 28px;
    height: 28px;
}
.folder span {
    margin-left: 26px;
}
.folder em {
    margin-left: auto;
    font-style: normal;
    font-size: 17px;
}
.folder-on {
    background: #d3e3fd;
    color: #041e49;
    font-weight: 700;
}
.labels-head {
    width: 335px;
    height: 48px;
    margin-top: 32px;
    padding-left: 21px;
    display: flex;
    align-items: center;
    justify-content: space-between;
    font-family: "Open Sans", sans-serif;
    font-size: 25px;
    font-weight: 500;
    color: #1f1f1f;
}
.labels-head .ico {
    width: 28px;
    height: 28px;
    color: #444746;
}

/* top bar + card */
.workspace {
    width: 1350px;
    flex: none;
    display: flex;
    flex-direction: column;
}
.topbar {
    height: 96px;
    flex: none;
    padding-top: 12px;
    display: flex;
    align-items: flex-start;
    color: #5f6368;
    width: 1410px;
}
.searchbox {
    width: 781px;
    height: 72px;
    border-radius: 36px;
    background: #e9f1fb;
    display: flex;
    align-items: center;
    padding-left: 19px;
    color: #444746;
}
.searchbox .ico {
    width: 34px;
    height: 34px;
}
.search-text {
    margin-left: 13px;
    font-size: 24px;
    color: #5c5f60;
}
.searchbox .search-tune {
    margin-left: auto;
    margin-right: 25px;
    width: 34px;
    height: 34px;
}
.status {
    width: 152px;
    height: 72px;
    margin-left: 45px;
    border-radius: 36px;
    background: #e9f1fb;
    display: flex;
    align-items: center;
    padding-left: 18px;
    font-size: 22px;
    font-weight: 500;
    color: #1f1f1f;
}
.status-dot {
    width: 18px;
    height: 18px;
    border-radius: 50%;
    background: #1e8e3e;
    margin-right: 13px;
}
.status .ico {
    width: 20px;
    height: 20px;
    margin-left: 8px;
    color: #5f6368;
}
.top-ico {
    width: 36px;
    height: 36px;
    margin: 18px 0 0 30px;
}
.top-help {
    margin-left: 33px;
    width: 36px;
    height: 36px;
}
.top-ico.top-apps {
    width: 30px;
    height: 30px;
    margin: 21px 0 0 33px;
}
.account {
    width: 200px;
    height: 72px;
    margin-left: 33px;
    background: #fff;
    border: 1px solid #dadce0;
    border-radius: 14px;
    display: flex;
    align-items: center;
    padding: 0 0 2px 8px;
    flex: none;
}
.google-word {
    font-family: "Open Sans", sans-serif;
    font-size: 39px;
    font-weight: 500;
    letter-spacing: -2px;
    color: #5f6368;
    width: 133px;
}
.avatar {
    width: 48px;
    height: 48px;
    margin-top: 2px;
    border-radius: 50%;
    background: #33691e;
    color: #fff;
    font-size: 24px;
    display: flex;
    align-items: center;
    justify-content: center;
    flex: none;
}
.card {
    height: 879px;
    background: #fff;
    border-radius: 22px;
    overflow: hidden;
    display: flex;
    flex-direction: column;
}
.mail-tools {
    height: 72px;
    flex: none;
    width: 1324px;
    display: flex;
    align-items: center;
    color: #444746;
    box-shadow: 0 2px 3px -1px rgba(60, 64, 67, 0.22);
    position: relative;
    padding-left: 6px;
}
.mt {
    width: 66px;
    height: 48px;
    display: flex;
    align-items: center;
    justify-content: center;
    flex: none;
}
.mt .ico {
    width: 28px;
    height: 28px;
}
.mt-first {
    margin-left: 18px;
}
.mt-sep {
    width: 1px;
    height: 30px;
    margin: 0 12px 0 11px;
    background: #dde1e6;
    flex: none;
}
.mt-more {
    margin-left: -5px;
}
.pager {
    margin-left: 291px;
    font-size: 18px;
    color: #5f6368;
    white-space: nowrap;
}
.pager-btn {
    width: 59px;
}
.pager-btn:nth-of-type(n) .ico {
    width: 26px;
    height: 26px;
}
.pager + .pager-btn {
    margin-left: 17px;
}
.mail-tools .kb {
    width: 26px;
    height: 22px;
    margin-left: 12px;
    margin-top: 2px;
    color: #444746;
}
.kb-caret {
    margin-left: 10px;
    border-left: 7px solid transparent;
    border-right: 7px solid transparent;
    border-top: 7px solid #444746;
    margin-top: -3px;
}
.mail-scroll {
    flex: 1;
    min-height: 0;
    display: grid;
    grid-template-columns: 108px 119px 956px 119px 31px 17px;
}
.gutter {
    background: #f3f5fa;
}
.scrollbar {
    padding-top: 218px;
}
.thumb {
    height: 358px;
    background: #c9c9c9;
    border-left: 2px solid #b5b5b5;
    border-top: 1px solid #aaa;
}

/* salesforce report */
.report {
    min-height: 0;
    overflow: hidden;
    padding: 31px 0 0 38px;
    font-family: "Liberation Sans", Arial, sans-serif;
    color: #16325c;
}
.report h1 {
    margin: 0 0 0 -38px;
    text-align: center;
    font-size: 42px;
    line-height: 46px;
    font-weight: 400;
    color: #000;
}
.report-sub {
    margin: 23px 0 0 -38px;
    text-align: center;
    font-size: 24px;
    line-height: 28px;
    color: #54698d;
}
.sf-btn {
    display: block;
    width: 264px;
    height: 65px;
    margin: 10px 0 0 308px;
    border-radius: 4px;
    background: #0070d2;
    color: #fff;
    font-size: 20px;
    letter-spacing: -0.3px;
    line-height: 65px;
    text-align: center;
}
.report h2 {
    margin: 0;
    font-size: 24px;
    line-height: 30px;
    font-weight: 400;
}
.details-h {
    margin-top: 33px !important;
}
.filters-h {
    margin-top: 29px;
    font-size: 20px;
    line-height: 24px;
    color: #222;
}
.chips {
    margin-top: 23px;
    display: flex;
    gap: 12px;
}
.chip {
    height: 53px;
    padding: 0 12px;
    border: 1px solid #d8dde6;
    border-radius: 5px;
    font-size: 18px;
    line-height: 50px;
}
.summary-h {
    margin-top: 71px !important;
}
.totals {
    margin: 34px 0 0 5px;
    display: flex;
}
.total {
    display: flex;
    flex-direction: column;
}
.total-a, .total-b {
    width: 147.500px;
}
.total span {
    font-size: 19.500px;
    line-height: 24px;
    color: #222;
}
.total b {
    margin: 9px 0 0 -1px;
    font-weight: 400;
    font-size: 33px;
    line-height: 38px;
}
.grid {
    margin: 31px 0 0 -36px;
    width: 951px;
    table-layout: fixed;
    border-collapse: collapse;
    font-size: 18px;
    line-height: 23px;
}
.c1 { width: 152px; }
.c2 { width: 191px; }
.c3 { width: 191px; }
.c4 { width: 184px; }
.c5 { width: 114px; }
.c6 { width: 119px; }
.grid th, .grid td {
    border: 1px solid #d8dde6;
    padding: 6px;
    text-align: left;
}
.grid thead tr {
    height: 81px;
}
.grid th {
    background: #f4f6f9;
    color: #54698d;
    font-weight: 400;
    vertical-align: bottom;
    padding: 3px 6px 5px;
}
.grid .up {
    font-style: normal;
    font-family: "DejaVu Sans", sans-serif;
    font-size: 20px;
    font-weight: 200;
    line-height: 0;
    margin-left: 3px;
    display: inline-block;
    vertical-align: -3px;
    transform: scaleX(0.6);
}
.grid td {
    height: 35px;
    padding: 5px 6px;
    white-space: nowrap;
}
.grid .group {
    vertical-align: top;
    color: #16325c;
    line-height: 24px;
    white-space: normal;
}
.group span {
    color: #54698d;
}
.lnk {
    color: #0070d2;
}
.grid .num {
    text-align: right;
}
.cal-num {
    font-family: "Liberation Sans", Arial, sans-serif;
    font-size: 12px;
    font-weight: 700;
    fill: #4285f4;
}
.teams-t {
    font-family: "Liberation Sans", Arial, sans-serif;
    font-size: 13px;
    font-weight: 700;
    fill: #fff;
}

/* right add-on column */
.addons {
    width: 84px;
    flex: none;
    display: flex;
    flex-direction: column;
    align-items: center;
    padding-top: 96px;
    position: relative;
}
.addon {
    height: 84px;
    display: flex;
    align-items: center;
}
.addon-sep {
    width: 30px;
    height: 1px;
    margin-top: 24px;
    background: #dfe1e5;
}
.addon-plus {
    width: 32px;
    height: 32px;
    margin-top: 50px;
    color: #111;
}
.addon-hide {
    width: 30px;
    height: 30px;
    margin-top: 402px;
    color: #1f1f1f;
}

/* taskbar */
.taskbar {
    height: 72px;
    flex: none;
    display: flex;
    align-items: center;
    background: linear-gradient(90deg, #1f2a33 0%, #1f2a33 18%, #10244f 42%, #10244f 62%, #1f2a33 82%, #1f2a33 100%);
    color: #fff;
    font-family: "Open Sans", sans-serif;
}
.weather {
    width: 434px;
    flex: none;
    display: flex;
    align-items: center;
    padding-left: 30px;
}
.weather-ico {
    width: 34px;
    height: 40px;
    position: relative;
}
.weather-badge {
    position: absolute;
    top: -9px;
    left: 17px;
    width: 21px;
    height: 24px;
    border-radius: 50%;
    background: #ff9ca6;
    color: #1a1a1a;
    font-size: 14px;
    font-weight: 400;
    line-height: 24px;
    text-align: center;
}
.weather-text {
    margin-left: 12px;
    display: flex;
    flex-direction: column;
    font-size: 17.500px;
    line-height: 25px;
}
.weather-sub {
    color: #d6d9dc;
}
.winlogo {
    flex: none;
}
.task-search {
    width: 329px;
    height: 48px;
    margin-left: 20px;
    border-radius: 24px;
    background: #364466;
    border: 1px solid #4a5878;
    display: flex;
    align-items: center;
    padding-left: 15px;
    font-size: 19px;
    color: #e6e9f0;
    flex: none;
    overflow: hidden;
}
.task-search span {
    margin-left: 16px;
}
.search-art {
    margin-left: auto;
    margin-right: 3px;
    align-self: flex-end;
}
.task-apps {
    display: flex;
    margin-left: 3px;
}
.app-slot {
    width: 66px;
    height: 60px;
    display: flex;
    align-items: center;
    justify-content: center;
    position: relative;
}
.ico-chrome {
    width: 40px;
    height: 40px;
}
.prof {
    position: absolute;
    top: 8px;
    right: 4px;
    width: 24px;
    height: 24px;
    border-radius: 50%;
    font-size: 12px;
    font-weight: 400;
    line-height: 24px;
    text-align: center;
}
.prof-s {
    background: #e8710a;
}
.prof-g {
    background: #33691e;
}
.app-open::after {
    content: "";
    position: absolute;
    bottom: 0;
    left: 29px;
    width: 8px;
    height: 5px;
    border-radius: 3px;
    background: #9aa3b2;
}
.app-current {
    width: 60px;
    margin: 0 3px;
    background: rgba(255, 255, 255, 0.09);
    border-radius: 6px;
}
.app-current .prof {
    right: 1px;
}
.app-current::after {
    content: "";
    position: absolute;
    bottom: 1px;
    left: 18px;
    width: 24px;
    height: 5px;
    border-radius: 3px;
    background: #4fc3f7;
}
.tray {
    margin-left: auto;
    display: flex;
    align-items: center;
    padding-right: 29px;
}
.tray-cloud {
    margin-left: 26px;
}
.tray-lang {
    width: 58px;
    margin-left: 14px;
    display: flex;
    flex-direction: column;
    align-items: center;
    font-size: 18px;
    line-height: 25px;
}
.tray-wifi {
    margin-left: 15px;
}
.tray-sound {
    margin-left: 8px;
}
.tray-batt {
    margin-left: 12px;
}
.tray-clock {
    width: 100px;
    margin-left: 19px;
    display: flex;
    flex-direction: column;
    align-items: flex-end;
    font-size: 17px;
    line-height: 26px;
    white-space: nowrap;
}
```
